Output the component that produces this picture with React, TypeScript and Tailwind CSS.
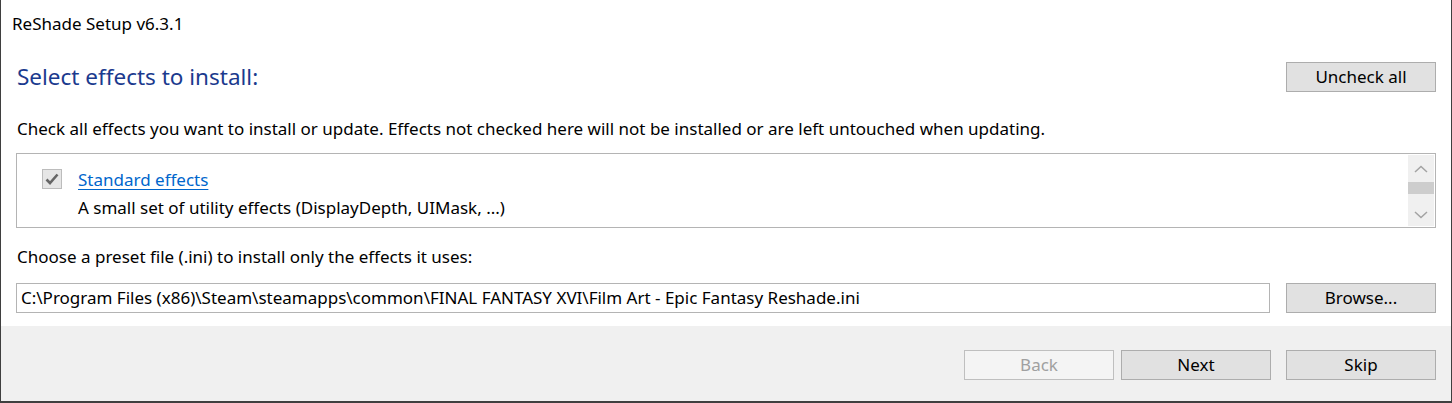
import React from "react";

function Btn({ label, disabled }: { label: string; disabled?: boolean }) {
  return (
    <div
      className={
        disabled
          ? "w-[150px] h-[30px] shrink-0 flex items-center justify-center border border-[#bfbfbf] bg-[#f4f4f4] text-[#a0a0a0] text-[17px]"
          : "w-[150px] h-[30px] shrink-0 flex items-center justify-center border border-[#adadad] bg-[#e1e1e1] text-black text-[17px]"
      }
    >
      {label}
    </div>
  );
}

export default function App() {
  return (
    <div
      className="w-[1452px] h-[403px] flex flex-col border-l border-r border-b-2 border-[#3f3f3f] bg-white text-black overflow-hidden"
      style={{ fontFamily: '"Noto Sans", "Open Sans", sans-serif' }}
    >
      <div className="h-[326px] bg-white flex flex-col pl-[15px] pr-[15px]">
        <div className="h-[48px] flex items-center -ml-[4px] text-[17px]">ReShade Setup v6.3.1</div>
        <div className="mt-[14px] h-[30px] flex items-center justify-between">
          <div className="pl-[1px] text-[22.5px] text-[#1b3a8e]">Select effects to install:</div>
          <Btn label="Uncheck all" />
        </div>
        <div className="mt-[22px] h-[30px] flex items-center pl-[1px] text-[17px]">
          Check all effects you want to install or update. Effects not checked here will not be installed or are left untouched when updating.
        </div>
        <div className="mt-[9px] h-[75px] border border-[#b4b4b4] flex">
          <div className="flex-1 flex pl-[25px] pt-[15px]">
            <div className="w-[20px] h-[20px] border border-[#bcbcbc] bg-[#e6e6e6] flex items-center justify-center">
              <svg width="14" height="12" viewBox="0 0 14 12">
                <path d="M1.5 6.5 L5 10 L12.5 1.5" fill="none" stroke="#666666" strokeWidth="2.6" />
              </svg>
            </div>
            <div className="ml-[16px] flex flex-col -mt-[3px] text-[17px]">
              <span className="text-[#0066cc] underline underline-offset-[3px] h-[28px] leading-[28px]">Standard effects</span>
              <span className="h-[28px] leading-[28px]">A small set of utility effects (DisplayDepth, UIMask, ...)</span>
            </div>
          </div>
          <div className="w-[26px] my-[1px] mr-[1px] bg-[#f0f0f0] flex flex-col items-center">
            <div className="h-[27px] flex items-center justify-center">
              <svg width="14" height="8" viewBox="0 0 14 8">
                <path d="M1 7 L7 1.5 L13 7" fill="none" stroke="#a3a3a3" strokeWidth="1.5" />
              </svg>
            </div>
            <div className="w-full h-[12px] bg-[#cdcdcd]" />
            <div className="flex-1 flex items-end justify-center pb-[7px]">
              <svg width="14" height="8" viewBox="0 0 14 8">
                <path d="M1 1 L7 6.5 L13 1" fill="none" stroke="#a3a3a3" strokeWidth="1.5" />
              </svg>
            </div>
          </div>
        </div>
        <div className="mt-[14px] h-[30px] flex items-center pl-[1px] text-[17px]">
          Choose a preset file (.ini) to install only the effects it uses:
        </div>
        <div className="mt-[11px] h-[30px] flex gap-[16px]">
          <div className="flex-1 border border-[#b4b4b4] flex items-center pl-[4px] text-[17px] whitespace-nowrap overflow-hidden">
            C:\Program Files (x86)\Steam\steamapps\common\FINAL FANTASY XVI\Film Art - Epic Fantasy Reshade.ini
          </div>
          <Btn label="Browse..." />
        </div>
      </div>
      <div className="flex-1 bg-[#f0f0f0] flex justify-end items-start pt-[24px] pr-[15px]">
        <Btn label="Back" disabled />
        <div className="w-[7px]" />
        <Btn label="Next" />
        <div className="w-[15px]" />
        <Btn label="Skip" />
      </div>
    </div>
  );
}
